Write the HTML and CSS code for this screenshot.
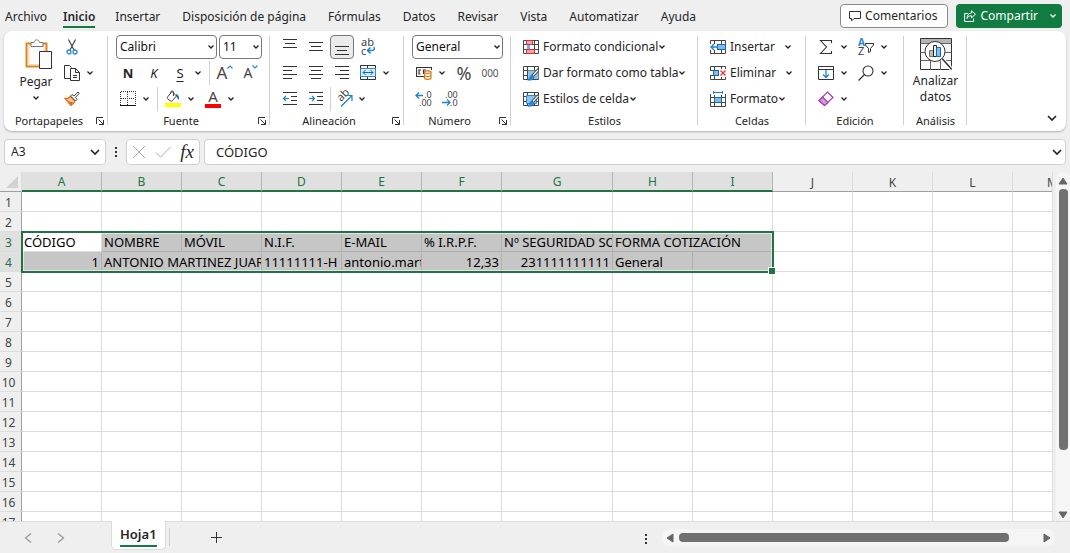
FILE: index.html
```html
<!DOCTYPE html>
<html lang="es">
<head>
<meta charset="utf-8">
<title>Hoja de cálculo</title>
<link rel="stylesheet" href="styles.css">
</head>
<body>
<svg class="defs" aria-hidden="true">
  <symbol id="chev" viewBox="0 0 8 8"><path d="M1.500 2.500 4 5l2.500-2.500" fill="none" stroke="#222" stroke-width="1.300"/></symbol>
  <symbol id="launch" viewBox="0 0 10 10"><path d="M1.500 8V1.500H8M3.500 3.500l5 5M8.500 4v4.500H4" fill="none" stroke="#333"/></symbol>
  <symbol id="grid" viewBox="0 0 16 14"><path d="M.5.5h15v13H.5zM.5 4.500h15M.5 9.500h15M4.500.5v13M11.500.5v13" fill="#fff" stroke="#444"/></symbol>
  <symbol id="brush" viewBox="0 0 16 16"><path d="M15 5 9.500 11" stroke="#444" stroke-width="3.200" stroke-linecap="round"/><path d="M15 5 9.500 11" stroke="#fff" stroke-width="1.200"/><path d="M9.500 10c-2 0-2.500 1.500-3 3-.4 1-1.500 1.500-2.500 1.700 2.500 1 6.500.8 7-2.700z" fill="#2b88d8" stroke="#1668b0" stroke-width=".6"/></symbol>
</svg>

<header class="top">
  <nav class="tabs">
    <a href="#">Archivo</a>
    <a href="#" class="active">Inicio</a>
    <a href="#">Insertar</a>
    <a href="#">Disposición de página</a>
    <a href="#">Fórmulas</a>
    <a href="#">Datos</a>
    <a href="#">Revisar</a>
    <a href="#">Vista</a>
    <a href="#">Automatizar</a>
    <a href="#">Ayuda</a>
  </nav>
  <button class="comments"><svg width="12" height="12" viewBox="0 0 12 12"><path d="M.5 1.500h11v7H5L2.500 11V8.500h-2z" fill="none" stroke="#333"/></svg>Comentarios</button>
  <button class="share"><svg width="12" height="12" viewBox="0 0 12 12"><path d="M4 3.500H.6v8h9V8.500M7.500.8l4 3.500-4 3.500V5.800C5 5.700 3.800 6.800 3 8.500c0-3 1.500-5.300 4.500-5.600z" fill="none" stroke="#fff"/></svg><span>Compartir</span><svg width="8" height="8" viewBox="0 0 8 8"><path d="M1.500 2.500 4 5l2.500-2.500" fill="none" stroke="#fff" stroke-width="1.300"/></svg></button>
</header>

<section class="ribbon">
  <div class="group clip">
    <div class="body split">
      <button class="big">
        <svg width="34" height="32" viewBox="-6 -1 34 32"><path d="M1.500 4.500h20v23h-20z" fill="#fdf6e8" stroke="#e08423" stroke-width="2"/><path d="M4 6.500h15v19H4z" fill="#fbfbfb" stroke="#f3dcb4"/><path d="M6 7.500v-4h3c.5-3.500 5-3.500 5.500 0H18v4z" fill="#fff" stroke="#777"/><path d="M14.500 12.500h12v17h-12z" fill="#fafafa" stroke="#333"/></svg>
        <span>Pegar</span>
        <svg width="8" height="8"><use href="#chev"/></svg>
      </button>
      <div class="rows">
        <div class="row"><button class="ic" aria-label="Cortar"><svg width="12" height="16" viewBox="0 0 12 16"><path d="M2.500.5 8 11M9.500.5 4 11" fill="none" stroke="#444" stroke-width="1.200"/><circle cx="3" cy="13" r="2" fill="none" stroke="#2b88d8" stroke-width="1.300"/><circle cx="9" cy="13" r="2" fill="none" stroke="#2b88d8" stroke-width="1.300"/></svg></button></div>
        <div class="row"><button class="ic" aria-label="Copiar"><svg width="16" height="16" viewBox="0 0 16 16"><path d="M6.500 13.500h-6V.5h5l2 2" fill="none" stroke="#333"/><path d="M6.500 3.500h5l4 4v8h-9zM11.500 3.500v4h4M9 10.500h4M9 12.500h4" fill="#fff" stroke="#333"/></svg></button><button class="dd" aria-label="Más"><svg width="8" height="8"><use href="#chev"/></svg></button></div>
        <div class="row"><button class="ic" aria-label="Copiar formato"><svg width="16" height="16" viewBox="0 0 16 16"><path d="M1 7.500c2 .3 4-.5 5.500-2L11 10c-1 1.800-2.500 3.500-4 4.500z" fill="#f9c38a" stroke="#d9721a" stroke-width="1.300"/><path d="m3 10 6 1.500-2 3z" fill="#d9721a"/><path d="m6.500 5 1.500-1.500L10 5l4-4 1.300 1.300L11.300 6.500 13 8.300 11.500 10z" fill="#fff" stroke="#444"/></svg></button></div>
      </div>
    </div>
    <div class="label"><span>Portapapeles</span><button class="launch" aria-label="Opciones"><svg width="10" height="10"><use href="#launch"/></svg></button></div>
  </div>

  <div class="group font">
    <div class="body">
      <div class="row boxes">
        <label class="sel w-name"><select aria-label="Fuente"><option>Calibri</option></select><svg width="8" height="8"><use href="#chev"/></svg></label>
        <label class="sel w-size"><select aria-label="Tamaño"><option>11</option></select><svg width="8" height="8"><use href="#chev"/></svg></label>
      </div>
      <div class="row">
        <button class="ic b">N</button><button class="ic i">K</button><button class="ic u">S</button><button class="dd" aria-label="Más"><svg width="8" height="8"><use href="#chev"/></svg></button>
        <i class="bar"></i>
        <button class="ic grow" aria-label="Aumentar"><span>A</span><svg width="6" height="4" viewBox="0 0 6 4"><path d="m.5 3.500 2.500-2.500 2.500 2.500" fill="none" stroke="#2b88d8" stroke-width="1.200"/></svg></button>
        <button class="ic shrink" aria-label="Disminuir"><span>A</span><svg width="6" height="4" viewBox="0 0 6 4"><path d="M.5.5 3 3 5.500.5" fill="none" stroke="#2b88d8" stroke-width="1.200"/></svg></button>
      </div>
      <div class="row">
        <button class="ic" aria-label="Bordes"><svg width="16" height="16" viewBox="0 0 16 16"><path d="M.5 14V.5h15V14M7.500 1v13M1 7.500h14" fill="none" stroke="#333" stroke-dasharray="1 1"/><path d="M0 14.500h16" stroke="#111"/></svg></button><button class="dd" aria-label="Más"><svg width="8" height="8"><use href="#chev"/></svg></button>
        <i class="bar"></i>
        <button class="ic" aria-label="Color de relleno"><svg width="16" height="18" viewBox="0 0 16 18"><path d="M7 1.500 2.500 7c-.5.700-.3 1.300.2 1.800L5.500 11c.6.400 1.200.3 1.700-.2l4.300-4.800zM5.500 3.500C5 1 8 0 8.500 2v4" fill="#fff" stroke="#444"/><path d="M11 4c2.500.5 3.500 2.500 2.800 6-1.500-1-1.600-3-2.800-4z" fill="#1668b0"/><path d="M0 13h16v4H0z" fill="#ff0"/></svg></button><button class="dd" aria-label="Más"><svg width="8" height="8"><use href="#chev"/></svg></button>
        <button class="ic fc" aria-label="Color de fuente"><span>A</span></button><button class="dd" aria-label="Más"><svg width="8" height="8"><use href="#chev"/></svg></button>
      </div>
    </div>
    <div class="label"><span>Fuente</span><button class="launch" aria-label="Opciones"><svg width="10" height="10"><use href="#launch"/></svg></button></div>
  </div>

  <div class="group align">
    <div class="body">
      <div class="row">
        <button class="ic" aria-label="Arriba"><svg width="16" height="16" viewBox="0 0 16 16"><path d="M1 .5h14M3 4.500h10M1 8.500h14" stroke="#333"/></svg></button>
        <button class="ic" aria-label="Medio"><svg width="16" height="16" viewBox="0 0 16 16"><path d="M1 3.500h14M3 7.500h10M1 11.500h14" stroke="#333"/></svg></button>
        <button class="ic on" aria-label="Abajo"><svg width="16" height="16" viewBox="0 0 16 16"><path d="M1 7.500h14M3 11.500h10M1 15.500h14" stroke="#333"/></svg></button>
        <button class="ic" aria-label="Ajustar texto"><svg width="16" height="18" viewBox="0 0 16 18"><text x="1" y="8" font-size="11">ab</text><text x="1" y="17" font-size="11">c</text><path d="M10.500 9.500 7.500 12.500l3 3M8 12.500h4c2.500 0 2.500-1.500 2-3.500" fill="none" stroke="#1f84d0" stroke-width="1.500"/></svg></button>
      </div>
      <div class="row">
        <button class="ic" aria-label="Izquierda"><svg width="16" height="16" viewBox="0 0 16 16"><path d="M1 1.500h14M1 5.500h9M1 9.500h14M1 13.500h9" stroke="#333"/></svg></button>
        <button class="ic" aria-label="Centrar"><svg width="16" height="16" viewBox="0 0 16 16"><path d="M1 1.500h14M3 5.500h10M1 9.500h14M3 13.500h10" stroke="#333"/></svg></button>
        <button class="ic" aria-label="Derecha"><svg width="16" height="16" viewBox="0 0 16 16"><path d="M1 1.500h14M6 5.500h9M1 9.500h14M6 13.500h9" stroke="#333"/></svg></button>
        <button class="ic" aria-label="Combinar"><svg width="16" height="16" viewBox="0 0 16 16"><path d="M.5.5h15v14H.5zM7.500 1v14" fill="#fff" stroke="#333"/><path d="M.5 3.500h15v8H.5z" fill="#d9ecfa" stroke="#2b88d8"/><path d="M3 7.500h10M5.500 5 3 7.500 5.500 10M10.500 5 13 7.500 10.500 10" fill="none" stroke="#1668b0"/></svg></button><button class="dd" aria-label="Más"><svg width="8" height="8"><use href="#chev"/></svg></button>
      </div>
      <div class="row">
        <button class="ic" aria-label="Disminuir sangría"><svg width="16" height="16" viewBox="0 0 16 16"><path d="M1 1.500h14M9 5.500h6M9 9.500h6M1 13.500h14" stroke="#333"/><path d="M1.500 7.500H7M4 5 1.500 7.500 4 10" fill="none" stroke="#1f84d0" stroke-width="1.200"/></svg></button>
        <button class="ic" aria-label="Aumentar sangría"><svg width="16" height="16" viewBox="0 0 16 16"><path d="M1 1.500h14M9 5.500h6M9 9.500h6M1 13.500h14" stroke="#333"/><path d="M1 7.500h5.500M4 5l2.500 2.500L4 10" fill="none" stroke="#1f84d0" stroke-width="1.200"/></svg></button>
        <i class="bar tight"></i>
        <button class="ic" aria-label="Orientación"><svg width="18" height="18" viewBox="0 0 18 18"><text x="0" y="0" transform="translate(6 12) rotate(-45)" font-size="11">ab</text><path d="M6 16.500 16.500 6M11.500 5.500H17V11" fill="none" stroke="#1f84d0" stroke-width="1.200"/></svg></button><button class="dd" aria-label="Más"><svg width="8" height="8"><use href="#chev"/></svg></button>
      </div>
    </div>
    <div class="label"><span>Alineación</span><button class="launch" aria-label="Opciones"><svg width="10" height="10"><use href="#launch"/></svg></button></div>
  </div>

  <div class="group num">
    <div class="body">
      <div class="row boxes"><label class="sel w-num"><select aria-label="Formato de número"><option>General</option></select><svg width="8" height="8"><use href="#chev"/></svg></label></div>
      <div class="row">
        <button class="ic" aria-label="Moneda"><svg width="16" height="14" viewBox="0 0 16 14"><path d="M8 10.500H.5v-9h15V4M5 4H3v4h1.500M10 4H7.500v4M12 4v1.500" fill="none" stroke="#333" stroke-width="1.200"/><path d="M8.500 6c0-1.600 6.500-1.600 6.500 0v6c0 1.800-6.500 1.800-6.500 0z" fill="#fff3e6" stroke="#e07818" stroke-width="1.200"/><path d="M8.500 6.500c1 1.300 5.500 1.300 6.500 0M8.500 9.500c1 1.300 5.500 1.300 6.500 0" fill="none" stroke="#e07818" stroke-width="1.200"/></svg></button><button class="dd" aria-label="Más"><svg width="8" height="8"><use href="#chev"/></svg></button>
        <button class="ic pct" aria-label="Porcentaje">%</button><button class="ic mil" aria-label="Millares">000</button>
      </div>
      <div class="row">
        <button class="ic" aria-label="Más decimales"><svg width="20" height="20" viewBox="-2 -2 20 20"><path d="M0 4.500h7M3 1.500l-3 3 3 3" fill="none" stroke="#1f84d0" stroke-width="1.300"/><text x="8" y="7" font-size="9">.0</text><text x="3" y="15" font-size="9">.00</text></svg></button>
        <button class="ic" aria-label="Menos decimales"><svg width="20" height="20" viewBox="-2 -2 20 20"><text x="3" y="7" font-size="9">.00</text><path d="M0 11.500h7.500M5 8.500l3 3-3 3" fill="none" stroke="#1f84d0" stroke-width="1.300"/><text x="8" y="15" font-size="9">.0</text></svg></button>
      </div>
    </div>
    <div class="label"><span>Número</span><button class="launch" aria-label="Opciones"><svg width="10" height="10"><use href="#launch"/></svg></button></div>
  </div>

  <div class="group styles">
    <div class="body">
      <div class="row"><button class="cmd"><svg width="16" height="16" viewBox="0 0 16 16"><use href="#grid" y="1" width="16" height="14"/><path d="M3.500 1.500h6v4h-6zM3.500 10.500h8v4h-8z" fill="#f9a0a4" stroke="#d13438"/><path d="M4 6h3v4H4z" fill="#69b1ea"/></svg><span>Formato condicional</span><svg width="8" height="8"><use href="#chev"/></svg></button></div>
      <div class="row"><button class="cmd"><svg width="16" height="16" viewBox="0 0 16 16"><use href="#grid" y="1" width="16" height="14"/><path d="M5 5.500h10.500V14H5z" fill="#8cc4f0"/><use href="#brush" width="16" height="16"/></svg><span>Dar formato como tabla</span><svg width="8" height="8"><use href="#chev"/></svg></button></div>
      <div class="row"><button class="cmd"><svg width="16" height="16" viewBox="0 0 16 16"><use href="#grid" y="1" width="16" height="14"/><path d="M3.500 4.500h10v8h-10z" fill="#8cc4f0" stroke="#2b88d8"/><use href="#brush" width="16" height="16"/></svg><span>Estilos de celda</span><svg width="8" height="8"><use href="#chev"/></svg></button></div>
    </div>
    <div class="label"><span>Estilos</span></div>
  </div>

  <div class="group cells">
    <div class="body">
      <div class="row"><button class="cmd far"><svg width="16" height="16" viewBox="0 0 16 16"><use href="#grid" y="1" width="16" height="14"/><path d="M7.500 5.500h8v5h-8z" fill="#7cbcf0" stroke="#1668b0"/><path d="M0 5h7v6H0z" fill="#fff"/><path d="M1 8h7M4 5 1 8l3 3" fill="none" stroke="#1f84d0" stroke-width="1.400"/></svg><span>Insertar</span><svg width="8" height="8"><use href="#chev"/></svg></button></div>
      <div class="row"><button class="cmd far"><svg width="16" height="16" viewBox="0 0 16 16"><use href="#grid" y="1" width="16" height="14"/><path d="M9 4h7v8H9zM0 6h3v4H0z" fill="#fff"/><path d="M3.500 5.500h5v5h-5z" fill="#7cbcf0" stroke="#1668b0"/><path d="m10.500 5.500 5 5M15.500 5.500l-5 5" stroke="#e8383d" stroke-width="1.400"/></svg><span>Eliminar</span><svg width="8" height="8"><use href="#chev"/></svg></button></div>
      <div class="row"><button class="cmd"><svg width="16" height="16" viewBox="0 0 16 16"><path d="M3 1.500h10M3.500 0v3M12.500 0v3" stroke="#1f84d0"/><path d="M.5 3v12.500h15V3M.5 6.500h15M.5 11.500h15M4.500 4v11M11.500 4v11" fill="none" stroke="#444"/><path d="M4.500 6.500h7v5h-7z" fill="#7cbcf0" stroke="#1668b0"/></svg><span>Formato</span><svg width="8" height="8"><use href="#chev"/></svg></button></div>
    </div>
    <div class="label"><span>Celdas</span></div>
  </div>

  <div class="group edit">
    <div class="body">
      <div class="row">
        <button class="ic" aria-label="Autosuma"><svg width="14" height="16" viewBox="0 0 14 16"><path d="M12.500 4V1.500H1.500L7.500 8l-6 6.500h11V12" fill="none" stroke="#333" stroke-width="1.100"/></svg></button><button class="dd" aria-label="Más"><svg width="8" height="8"><use href="#chev"/></svg></button>
        <button class="ic" aria-label="Ordenar y filtrar"><svg width="18" height="18" viewBox="0 0 18 18"><text x="1" y="8" font-size="10" font-weight="bold" class="blue">A</text><text x="1" y="17" font-size="11">Z</text><path d="M8.500 5.500h8v1.500l-3 3.500v3l-2 1v-4l-3-3.500z" fill="none" stroke="#333"/></svg></button><button class="dd" aria-label="Más"><svg width="8" height="8"><use href="#chev"/></svg></button>
      </div>
      <div class="row">
        <button class="ic" aria-label="Rellenar"><svg width="16" height="16" viewBox="0 0 16 16"><path d="M.5 1.500h15v13H.5zM.5 4.500h15" fill="#fff" stroke="#333"/><path d="M8 5v7M5 9.500 8 12.500l3-3" fill="none" stroke="#1f84d0" stroke-width="1.300"/></svg></button><button class="dd" aria-label="Más"><svg width="8" height="8"><use href="#chev"/></svg></button>
        <button class="ic" aria-label="Buscar"><svg width="16" height="16" viewBox="0 0 16 16"><circle cx="10" cy="6" r="5" fill="none" stroke="#333" stroke-width="1.100"/><path d="M6.500 9.500.5 15.500" stroke="#333" stroke-width="1.300"/></svg></button><button class="dd" aria-label="Más"><svg width="8" height="8"><use href="#chev"/></svg></button>
      </div>
      <div class="row">
        <button class="ic" aria-label="Borrar"><svg width="16" height="16" viewBox="0 0 16 16"><path d="M9.500 1 15 6.500l-8.500 8-5.500-5z" fill="#fff" stroke="#a33fad" stroke-width="1.200"/><path d="m4.500 6 5.500 5.500-3.500 3L1 9.500z" fill="#d99be0" stroke="#a33fad" stroke-width="1.200"/></svg></button><button class="dd" aria-label="Más"><svg width="8" height="8"><use href="#chev"/></svg></button>
      </div>
    </div>
    <div class="label"><span>Edición</span></div>
  </div>

  <div class="group analysis">
    <div class="body">
      <button class="big">
        <svg width="32" height="32" viewBox="0 0 32 32"><path d="M.5.5h31v31H.5z" fill="#fafafa" stroke="#333"/><path d="M1 1h30v4H1z" fill="#b5b5b5"/><path d="M.5 5.500h31M.5 14.500h31M.5 22.500h31M10.500 22v10M20.500 22v10" stroke="#666"/><circle cx="15" cy="13.500" r="10" fill="#fff" stroke="#333"/><path d="m22 21 9.500 10" stroke="#fff" stroke-width="4"/><path d="m22 20.500 9.500 10.500" stroke="#333" stroke-width="1.500"/><path d="M9.500 12.500h4v6h-4z" fill="#bbb" stroke="#777"/><path d="M13.500 7.500h3v11h-3z" fill="#eee" stroke="#222"/><path d="M16.500 9.500h4v9h-4z" fill="#7cbcf0" stroke="#1668b0"/></svg>
        <span>Analizar<br>datos</span>
      </button>
    </div>
    <div class="label"><span>Análisis</span></div>
  </div>
  <button class="collapse" aria-label="Contraer"><svg width="12" height="10" viewBox="0 0 12 10"><path d="m2 3 4 4 4-4" fill="none" stroke="#222" stroke-width="1.600"/></svg></button>
</section>

<section class="formula">
  <label class="namebox"><input value="A3" aria-label="Cuadro de nombres"><svg width="12" height="10" viewBox="0 0 12 10"><path d="m2 3 4 4 4-4" fill="none" stroke="#222" stroke-width="1.600"/></svg></label>
  <span class="dots"><i></i><i></i><i></i></span>
  <div class="fx">
    <button aria-label="Cancelar"><svg width="14" height="14" viewBox="0 0 14 14"><path d="m1 1 12 12M13 1 1 13" stroke="#aaa"/></svg></button>
    <button aria-label="Aceptar"><svg width="16" height="14" viewBox="0 0 16 14"><path d="m1 7.500 4.500 4.500L15.500 2" fill="none" stroke="#aaa"/></svg></button>
    <button class="fn">fx</button>
  </div>
  <label class="content"><input value="CÓDIGO" aria-label="Barra de fórmulas"><svg width="12" height="10" viewBox="0 0 12 10"><path d="m2 3 4 4 4-4" fill="none" stroke="#222" stroke-width="1.600"/></svg></label>
</section>

<main class="sheet">
  <div class="view">
    <table>
      <colgroup><col class="c0"><col span="6" class="c"><col class="cg"><col span="6" class="c"></colgroup>
      <thead><tr><th class="corner"><svg width="12" height="12" viewBox="0 0 12 12"><path d="M12 0v12H0z" fill="#d2d2d2"/></svg></th><th class="s">A</th><th class="s">B</th><th class="s">C</th><th class="s">D</th><th class="s">E</th><th class="s">F</th><th class="s">G</th><th class="s">H</th><th class="s">I</th><th>J</th><th>K</th><th>L</th><th>M</th></tr></thead>
      <tbody>
        <tr><th>1</th><td></td><td></td><td></td><td></td><td></td><td></td><td></td><td></td><td></td><td></td><td></td><td></td><td></td></tr>
        <tr><th>2</th><td></td><td></td><td></td><td></td><td></td><td></td><td></td><td></td><td></td><td></td><td></td><td></td><td></td></tr>
        <tr class="picked"><th>3</th><td class="cur">CÓDIGO</td><td class="g">NOMBRE</td><td class="g">MÓVIL</td><td class="g">N.I.F.</td><td class="g">E-MAIL</td><td class="g">% I.R.P.F.</td><td class="g">Nº SEGURIDAD SOCIAL</td><td class="g" colspan="2">FORMA COTIZACIÓN</td><td></td><td></td><td></td><td></td></tr>
        <tr class="picked"><th>4</th><td class="g r">1</td><td class="g" colspan="2">ANTONIO MARTINEZ JUAREZ</td><td class="g">11111111-H</td><td class="g">antonio.martinez</td><td class="g r">12,33</td><td class="g r">231111111111</td><td class="g">General</td><td class="g"></td><td></td><td></td><td></td><td></td></tr>
        <tr><th>5</th><td></td><td></td><td></td><td></td><td></td><td></td><td></td><td></td><td></td><td></td><td></td><td></td><td></td></tr>
        <tr><th>6</th><td></td><td></td><td></td><td></td><td></td><td></td><td></td><td></td><td></td><td></td><td></td><td></td><td></td></tr>
        <tr><th>7</th><td></td><td></td><td></td><td></td><td></td><td></td><td></td><td></td><td></td><td></td><td></td><td></td><td></td></tr>
        <tr><th>8</th><td></td><td></td><td></td><td></td><td></td><td></td><td></td><td></td><td></td><td></td><td></td><td></td><td></td></tr>
        <tr><th>9</th><td></td><td></td><td></td><td></td><td></td><td></td><td></td><td></td><td></td><td></td><td></td><td></td><td></td></tr>
        <tr><th>10</th><td></td><td></td><td></td><td></td><td></td><td></td><td></td><td></td><td></td><td></td><td></td><td></td><td></td></tr>
        <tr><th>11</th><td></td><td></td><td></td><td></td><td></td><td></td><td></td><td></td><td></td><td></td><td></td><td></td><td></td></tr>
        <tr><th>12</th><td></td><td></td><td></td><td></td><td></td><td></td><td></td><td></td><td></td><td></td><td></td><td></td><td></td></tr>
        <tr><th>13</th><td></td><td></td><td></td><td></td><td></td><td></td><td></td><td></td><td></td><td></td><td></td><td></td><td></td></tr>
        <tr><th>14</th><td></td><td></td><td></td><td></td><td></td><td></td><td></td><td></td><td></td><td></td><td></td><td></td><td></td></tr>
        <tr><th>15</th><td></td><td></td><td></td><td></td><td></td><td></td><td></td><td></td><td></td><td></td><td></td><td></td><td></td></tr>
        <tr><th>16</th><td></td><td></td><td></td><td></td><td></td><td></td><td></td><td></td><td></td><td></td><td></td><td></td><td></td></tr>
        <tr><th>17</th><td></td><td></td><td></td><td></td><td></td><td></td><td></td><td></td><td></td><td></td><td></td><td></td><td></td></tr>
      </tbody>
    </table>
    <div class="selection"></div>
  </div>
  <div class="vbar">
    <svg width="10" height="8" viewBox="0 0 10 8"><path d="m5 1 4 6H1z" fill="#666" stroke="#666" stroke-linejoin="round"/></svg>
    <div class="track"><div class="thumb"></div></div>
    <svg width="10" height="8" viewBox="0 0 10 8"><path d="m5 7 4-6H1z" fill="#666" stroke="#666" stroke-linejoin="round"/></svg>
  </div>
</main>

<footer class="foot">
  <button class="nav" aria-label="Anterior"><svg width="8" height="10" viewBox="0 0 8 10"><path d="M7 .5 1.500 5 7 9.500" fill="none" stroke="#999" stroke-width="1.300"/></svg></button>
  <button class="nav" aria-label="Siguiente"><svg width="8" height="10" viewBox="0 0 8 10"><path d="M1 .5 6.500 5 1 9.500" fill="none" stroke="#999" stroke-width="1.300"/></svg></button>
  <button class="tab"><span>Hoja1</span></button>
  <i class="bar"></i>
  <button class="add" aria-label="Nueva hoja"><svg width="12" height="12" viewBox="0 0 12 12"><path d="M5.500 0v11M0 5.500h11" stroke="#333"/></svg></button>
  <span class="dots"><i></i><i></i><i></i></span>
  <div class="hbar">
    <svg width="8" height="10" viewBox="0 0 8 10"><path d="m1 5 6-4v8z" fill="#666" stroke="#666" stroke-linejoin="round"/></svg>
    <div class="track"><div class="thumb"></div></div>
    <svg width="8" height="10" viewBox="0 0 8 10"><path d="M7 5 1 1v8z" fill="#666" stroke="#666" stroke-linejoin="round"/></svg>
  </div>
</footer>
</body>
</html>
```
FILE: styles.css
```css
* { box-sizing: border-box; }
body {
  margin: 0;
  height: 100vh;
  display: flex;
  flex-direction: column;
  overflow: hidden;
  background: #efefef;
  color: #262626;
  font: 12px/16px "Noto Sans", "Open Sans", sans-serif;
}
button, input, select { font: inherit; color: inherit; background: none; border: 0; padding: 0; margin: 0; }
svg { display: block; flex: none; }
svg text { fill: #444; }
svg text.blue { fill: #1f84d0; }
.defs { position: absolute; width: 0; height: 0; }

/* Tab strip */
.top { display: flex; align-items: center; height: 31px; padding: 1px 8px 0 5px; flex: none; }
.tabs { display: flex; gap: 22px; flex: 1; white-space: nowrap; }
.tabs a { color: inherit; text-decoration: none; padding: 4px 0 1px; border-bottom: 2px solid transparent; }
.tabs .active { margin: 0 -2px 0 -6px; font-weight: 600; border-color: #107c41; }
.comments, .share { display: flex; align-items: center; height: 24px; border-radius: 4px; white-space: nowrap; }
.comments { gap: 4px; padding: 0 10px 0 8px; border: 1px solid #8a8a8a; background: #fff; }
.share { gap: 4px; margin-left: 8px; padding: 0 5px 0 8px; background: #107c41; color: #fff; }
.share span { margin-right: 7px; }

/* Ribbon */
.ribbon {
  display: flex;
  flex: none;
  margin: 0 4px;
  background: #fff;
  border-radius: 8px;
  box-shadow: 0 1px 2px #0004;
}
.group {
  display: flex;
  flex-direction: column;
  flex: none;
  padding: 3px 0 1px;
  background: linear-gradient(#d0d0d0, #d0d0d0) right 5px / 1px 89px no-repeat;
}
.body { padding-left: 8px; }
.row { display: flex; align-items: center; height: 26px; }
.label { display: flex; justify-content: center; align-items: center; height: 18px; position: relative; font-size: 11px; }
.launch { position: absolute; right: 3px; top: 4px; }
.clip { width: 104px; }
.clip .label { padding-right: 14px; }
.font .label, .align .label, .num .label { padding-right: 16px; }
.font { width: 162px; }
.align { width: 134px; }
.num { width: 107px; }
.styles { width: 187px; }
.cells { width: 108px; }
.edit { width: 98px; }
.analysis { width: 63px; }
.split { display: flex; }
.big { display: flex; flex-direction: column; align-items: center; width: 48px; padding-top: 4px; }
.big span { margin: 4px 0; }
.rows { display: flex; flex-direction: column; }
.analysis .body { height: 78px; padding: 0; display: flex; justify-content: center; }
.analysis .big { white-space: nowrap; }
.analysis .big span { margin: 3px 0 0; }

.ic { display: flex; align-items: center; justify-content: center; width: 24px; height: 24px; margin-right: 2px; flex: none; }
.clip .ic, .ic:has(+ .dd) { margin-right: 0; }
.dd { display: flex; align-items: center; justify-content: center; width: 12px; height: 24px; margin-right: 4px; flex: none; }
.bar { width: 1px; height: 24px; margin: 0 3px 0 1px; background: #d0d0d0; flex: none; }
.tight { margin: 0 1px 0 0; }
.b { font-weight: bold; font-size: 13px; }
.i { font-style: italic; font-size: 13px; }
.u { text-decoration: underline; text-underline-offset: 3px; font-size: 13px; }
.grow, .shrink { align-items: flex-start; padding-top: 4px; color: #444; }
.grow span { font-size: 17px; }
.shrink span { font-size: 14px; }
.fc span { width: 16px; height: 18px; line-height: 13px; font-size: 15px; text-align: center; border-bottom: 4px solid #f00; color: #444; }
.on { border: 1px solid #777; border-radius: 4px; background: #ebebeb; }
.pct { font-size: 18px; color: #444; }
.mil { font-size: 10px; color: #555; }

.boxes { gap: 2px; }
.sel { position: relative; display: flex; align-items: center; }
.sel select { width: 100%; height: 24px; padding-left: 3px; appearance: none; border: 1px solid #777; border-radius: 4px; background: #fff; color: #111; }
.sel svg { position: absolute; right: 2px; pointer-events: none; }
.w-name { width: 101px; }
.w-size { width: 43px; }
.w-num { width: 91px; }

.styles .body, .cells .body { padding-left: 12px; }
.cmd { display: flex; align-items: center; gap: 4px; white-space: nowrap; }
.cmd span { margin-right: -4px; }
.far span { margin-right: 5px; }
.collapse { margin: auto 8px 8px auto; }

/* Formula bar */
.formula { display: flex; flex: none; height: 26px; margin: 8px 4px 7px; font-size: 13px; }
.namebox, .fx, .content { display: flex; align-items: center; background: #fff; border: 1px solid #d0d0d0; border-radius: 4px; }
.namebox { width: 102px; padding: 0 4px 0 6px; font-size: 12px; }
.namebox input, .content input { flex: 1; min-width: 0; outline: 0; }
.dots { display: flex; flex-direction: column; align-items: center; justify-content: center; gap: 2px; width: 20px; }
.dots i { width: 2px; height: 2px; background: #333; }
.fx { width: 74px; margin-right: 4px; padding: 0 5px; justify-content: space-between; }
.fn { font: italic 19px/22px "Liberation Serif", serif; }
.content { flex: 1; padding: 0 2px 0 11px; }

/* Sheet */
.sheet { display: flex; flex: 1; min-height: 0; }
.view { position: relative; flex: 1; overflow: hidden; min-width: 0; border-right: 1px solid #dcdcdc; }
table { table-layout: fixed; width: 1093px; border-collapse: separate; border-spacing: 0; }
.c0 { width: 22px; }
.c { width: 80px; }
.cg { width: 111px; }
th, td { height: 20px; padding: 2px 2px 0; overflow: hidden; white-space: nowrap; line-height: 17px; border-right: 1px solid #dcdcdc; border-bottom: 1px solid #dcdcdc; }
th { font-weight: normal; color: #444; background: #efefef; text-align: center; }
thead th { border-bottom-color: #a0a0a0; }
tbody th { padding: 2px 4px 0 0; border-right-color: #a0a0a0; }
td { background: #fff; color: #000; font-size: 13px; }
thead .s, .picked th { background: #e0e0e0; color: #217346; }
thead .s { border-right-color: #b4b4b4; border-bottom: 2px solid #217346; line-height: 16px; }
.picked .g { background: #c6c6c6; border-color: #b0b0b0; }
.picked .r { text-align: right; }
thead .corner { padding: 0 3px; }
.corner svg { margin-left: auto; }
.selection { position: absolute; left: 21px; top: 59px; width: 753px; height: 42px; border: 2px solid #217346; box-shadow: inset 0 0 0 1px #fff8; }
.selection::after { content: ""; position: absolute; right: -3px; bottom: -3px; width: 6px; height: 6px; background: #217346; border: solid #fff; border-width: 1px 0 0 1px; }
.vbar { display: flex; flex-direction: column; align-items: center; gap: 4px; width: 14px; margin-left: 3px; padding: 5px 0 2px; border-radius: 7px; background: #f5f5f5; }
.vbar .track { flex: 1; }
.vbar .thumb { width: 9px; height: 82%; border-radius: 4px; background: #707070; }

/* Footer */
.foot { display: flex; flex: none; height: 32px; border-top: 1px solid #dcdcdc; }
.nav { display: flex; align-items: center; justify-content: center; width: 33px; }
.nav:first-child { margin-left: 11px; }
.tab { display: flex; height: 29px; margin: -1px 3px 0 34px; padding: 3px 8px 0; background: #fff; border: 1px solid #dcdcdc; border-top: 0; border-radius: 0 0 5px 5px; font-weight: 600; }
.tab span { height: 23px; line-height: 20px; font-size: 13px; border-bottom: 2px solid #107c41; }
.foot .bar { height: 18px; margin: 6px 0 0; }
.add { width: 95px; display: flex; align-items: center; justify-content: center; }
.foot .dots { margin-left: auto; padding-top: 2px; }
.hbar { display: flex; align-items: center; gap: 5px; width: 393px; height: 17px; margin: 7px 15px 0 6px; padding: 0 4px; border-radius: 8px; background: #f5f5f5; }
.hbar .track { flex: 1; }
.hbar .thumb { width: 92%; height: 9px; border-radius: 4px; background: #707070; }
```
